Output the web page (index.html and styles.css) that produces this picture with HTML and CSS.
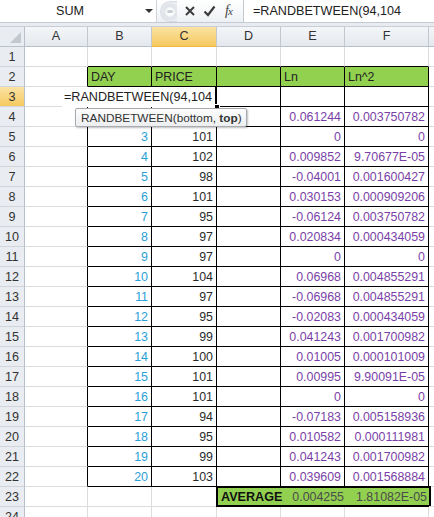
FILE: index.html
```html
<!DOCTYPE html>
<html>
<head>
<meta charset="utf-8">
<link rel="stylesheet" href="styles.css">
</head>
<body>
<div class="app">
  <div class="fbar">
    <div class="namebox"><span class="name">SUM</span><span class="drop"></span></div>
    <div class="btns">
      <span class="grip"><span class="dot"></span></span>
      <svg class="ic" width="12" height="12" viewBox="0 0 12 12"><path d="M2 2 L10 10 M10 2 L2 10" stroke="#3c3c3c" stroke-width="2" fill="none"/></svg>
      <svg class="ic" width="13" height="12" viewBox="0 0 13 12"><path d="M1.5 6.5 L5 10 L11.5 1.5" stroke="#3c3c3c" stroke-width="2.2" fill="none"/></svg>
      <span class="fx">f<i>x</i></span>
    </div>
    <div class="finput">=RANDBETWEEN(94,104</div>
  </div>
  <div class="strip"></div>
  <div class="sheet">
    <div class="corner"><span class="tri"></span></div>
    <div class="h">A</div><div class="h">B</div><div class="h act">C</div><div class="h">D</div><div class="h">E</div><div class="h">F</div><div class="h"></div>

    <div class="rh">1</div><div class="c"></div><div class="c bb"></div><div class="c bb"></div><div class="c bb"></div><div class="c bb"></div><div class="c bb"></div><div class="c"></div>

    <div class="rh">2</div><div class="c br"></div><div class="c b g">DAY</div><div class="c b g">PRICE</div><div class="c b g"></div><div class="c b g">Ln</div><div class="c b g">Ln^2</div><div class="c"></div>

    <div class="rh act">3</div><div class="c br"></div><div class="c b"></div>
    <div class="c b active">
      <div class="edit">=RANDBETWEEN(94,104</div>
      <span class="handle"></span>
      <div class="tip">RANDBETWEEN(bottom, <b>top</b>)</div>
    </div>
    <div class="c b"></div><div class="c b"></div><div class="c b"></div><div class="c"></div>

    <div class="rh">4</div><div class="c br"></div><div class="c b n day"></div><div class="c b n pr"></div><div class="c b"></div><div class="c b n ln">0.061244</div><div class="c b n ln">0.003750782</div><div class="c"></div>
    <div class="rh">5</div><div class="c br"></div><div class="c b n day">3</div><div class="c b n pr">101</div><div class="c b"></div><div class="c b n ln">0</div><div class="c b n ln">0</div><div class="c"></div>
    <div class="rh">6</div><div class="c br"></div><div class="c b n day">4</div><div class="c b n pr">102</div><div class="c b"></div><div class="c b n ln">0.009852</div><div class="c b n ln">9.70677E-05</div><div class="c"></div>
    <div class="rh">7</div><div class="c br"></div><div class="c b n day">5</div><div class="c b n pr">98</div><div class="c b"></div><div class="c b n ln">-0.04001</div><div class="c b n ln">0.001600427</div><div class="c"></div>
    <div class="rh">8</div><div class="c br"></div><div class="c b n day">6</div><div class="c b n pr">101</div><div class="c b"></div><div class="c b n ln">0.030153</div><div class="c b n ln">0.000909206</div><div class="c"></div>
    <div class="rh">9</div><div class="c br"></div><div class="c b n day">7</div><div class="c b n pr">95</div><div class="c b"></div><div class="c b n ln">-0.06124</div><div class="c b n ln">0.003750782</div><div class="c"></div>
    <div class="rh">10</div><div class="c br"></div><div class="c b n day">8</div><div class="c b n pr">97</div><div class="c b"></div><div class="c b n ln">0.020834</div><div class="c b n ln">0.000434059</div><div class="c"></div>
    <div class="rh">11</div><div class="c br"></div><div class="c b n day">9</div><div class="c b n pr">97</div><div class="c b"></div><div class="c b n ln">0</div><div class="c b n ln">0</div><div class="c"></div>
    <div class="rh">12</div><div class="c br"></div><div class="c b n day">10</div><div class="c b n pr">104</div><div class="c b"></div><div class="c b n ln">0.06968</div><div class="c b n ln">0.004855291</div><div class="c"></div>
    <div class="rh">13</div><div class="c br"></div><div class="c b n day">11</div><div class="c b n pr">97</div><div class="c b"></div><div class="c b n ln">-0.06968</div><div class="c b n ln">0.004855291</div><div class="c"></div>
    <div class="rh">14</div><div class="c br"></div><div class="c b n day">12</div><div class="c b n pr">95</div><div class="c b"></div><div class="c b n ln">-0.02083</div><div class="c b n ln">0.000434059</div><div class="c"></div>
    <div class="rh">15</div><div class="c br"></div><div class="c b n day">13</div><div class="c b n pr">99</div><div class="c b"></div><div class="c b n ln">0.041243</div><div class="c b n ln">0.001700982</div><div class="c"></div>
    <div class="rh">16</div><div class="c br"></div><div class="c b n day">14</div><div class="c b n pr">100</div><div class="c b"></div><div class="c b n ln">0.01005</div><div class="c b n ln">0.000101009</div><div class="c"></div>
    <div class="rh">17</div><div class="c br"></div><div class="c b n day">15</div><div class="c b n pr">101</div><div class="c b"></div><div class="c b n ln">0.00995</div><div class="c b n ln">9.90091E-05</div><div class="c"></div>
    <div class="rh">18</div><div class="c br"></div><div class="c b n day">16</div><div class="c b n pr">101</div><div class="c b"></div><div class="c b n ln">0</div><div class="c b n ln">0</div><div class="c"></div>
    <div class="rh">19</div><div class="c br"></div><div class="c b n day">17</div><div class="c b n pr">94</div><div class="c b"></div><div class="c b n ln">-0.07183</div><div class="c b n ln">0.005158936</div><div class="c"></div>
    <div class="rh">20</div><div class="c br"></div><div class="c b n day">18</div><div class="c b n pr">95</div><div class="c b"></div><div class="c b n ln">0.010582</div><div class="c b n ln">0.000111981</div><div class="c"></div>
    <div class="rh">21</div><div class="c br"></div><div class="c b n day">19</div><div class="c b n pr">99</div><div class="c b"></div><div class="c b n ln">0.041243</div><div class="c b n ln">0.001700982</div><div class="c"></div>
    <div class="rh">22</div><div class="c br"></div><div class="c b n day">20</div><div class="c b n pr">103</div><div class="c b"></div><div class="c b n ln">0.039609</div><div class="c b n ln">0.001568884</div><div class="c"></div>

    <div class="rh">23</div><div class="c"></div><div class="c"></div><div class="c"></div>
    <div class="avg"><span class="al">AVERAGE</span><span class="av">0.004255</span><span class="av">1.81082E-05</span></div>
    <div class="c"></div>

    <div class="rh">24</div><div class="c"></div><div class="c"></div><div class="c"></div><div class="c"></div><div class="c"></div><div class="c"></div><div class="c"></div>
  </div>
</div>
</body>
</html>
```
FILE: styles.css
```css
* { box-sizing: border-box; }
html, body { margin: 0; padding: 0; background: #fff; }
body { font-family: "Liberation Sans", Arial, sans-serif; font-size: 12.4px; color: #222; overflow: hidden; }
.app { width: 434px; height: 517px; overflow: hidden; }

.fbar { display: flex; height: 23px; background: #fff; border-bottom: 1px solid #c5cad1; }
.namebox { width: 157px; display: flex; align-items: center; border-right: 1px solid #d0d4da; }
.name { width: 140px; text-align: center; color: #222; font-size: 12.6px; }
.drop { width: 0; height: 0; border-left: 4px solid transparent; border-right: 4px solid transparent; border-top: 4px solid #333; margin-left: 5px; }
.btns { width: 86px; display: flex; align-items: center; gap: 7px; background: linear-gradient(#ffffff, #eef1f5); }
.grip { width: 17px; height: 21px; margin-left: 3px; border-radius: 11px 0 0 11px; background: radial-gradient(circle at 9px 10px, #ffffff 3px, #dfe3e8 6px, #eceff3 11px); border: 1px solid #d9dde3; border-right: none; display: flex; align-items: center; justify-content: center; }
.dot { width: 6px; height: 3px; border-radius: 2px; background: #c9ced5; margin-left: 2px; }
.ic { display: block; }
.fx { font-family: "Liberation Serif", serif; font-style: italic; font-size: 14px; color: #444; margin-left: 2px; letter-spacing: -1px; }
.fx i { font-size: 11px; }
.finput { flex: 1; border-left: 1px solid #c5cad1; padding-left: 9px; line-height: 22px; font-size: 12.6px; color: #222; white-space: nowrap; }
.strip { height: 4px; background: #e8ebef; border-bottom: 1px solid #c9ced6; }

.sheet { display: grid; grid-template-columns: 25px 63px 64px 65px 64px 64px 84px 1fr; grid-auto-rows: 20px; }
.corner { background: #e9ecf0; border-right: 1px solid #b9c0c9; border-bottom: 1px solid #b9c0c9; position: relative; }
.tri { position: absolute; right: 3px; bottom: 3px; width: 0; height: 0; border-left: 11px solid transparent; border-bottom: 11px solid #c3c8ce; }
.h { background: linear-gradient(#f4f6f8, #e4e8ed); border-right: 1px solid #c2c8d0; border-bottom: 1px solid #b9c0c9; text-align: center; line-height: 19px; color: #333; font-size: 12.6px; }
.rh { background: #e9ecf0; border-right: 1px solid #b9c0c9; border-bottom: 1px solid #d0d5dc; text-align: center; line-height: 21px; color: #333; font-size: 12.6px; }
.act { background: linear-gradient(#fbe3a3, #f5c95f); color: #333; }
.h.act { border-bottom-color: #f0b844; }

.c { border-right: 1px solid #dadcdd; border-bottom: 1px solid #dadcdd; padding: 0 3px; line-height: 21px; white-space: nowrap; overflow: visible; }
.b { border-right-color: #000; border-bottom-color: #000; }
.br { border-right-color: #000; }
.bb { border-bottom-color: #000; }
.g { background: #92d050; color: #222; }
.n { text-align: right; }
.day { color: #2aa0d8; }
.pr { color: #2b2b2b; }
.ln { color: #7a3fa6; }

.active { position: relative; }
.edit { position: absolute; right: -1px; top: 0; height: 20px; background: #fff; padding: 0 3px 0 2px; border-right: 2px solid #000; color: #222; line-height: 21px; z-index: 2; font-size: 12.6px; }
.handle { position: absolute; right: -4px; bottom: -4px; width: 6px; height: 6px; background: #000; border: 1px solid #fff; z-index: 3; }
.tip { position: absolute; left: -77px; top: 21px; height: 19px; padding: 0 4px 0 5px; line-height: 18px; font-size: 11.8px; background: linear-gradient(#fdfdfd, #eceeef); border: 1px solid #a7abb0; border-radius: 2px; box-shadow: 1px 1px 2px rgba(0,0,0,0.25); color: #333; z-index: 4; white-space: nowrap; }
.tip b { font-weight: bold; }

.avg { grid-column: span 3; display: grid; grid-template-columns: 64px 64px 1fr; background: #92d050; border: 2px solid #000; margin: -1px -2px 0 -1px; line-height: 19px; }
.al { font-weight: bold; color: #111; padding-left: 3px; font-size: 12.6px; }
.av { text-align: right; color: #4a4a4a; padding-right: 2px; }
```
